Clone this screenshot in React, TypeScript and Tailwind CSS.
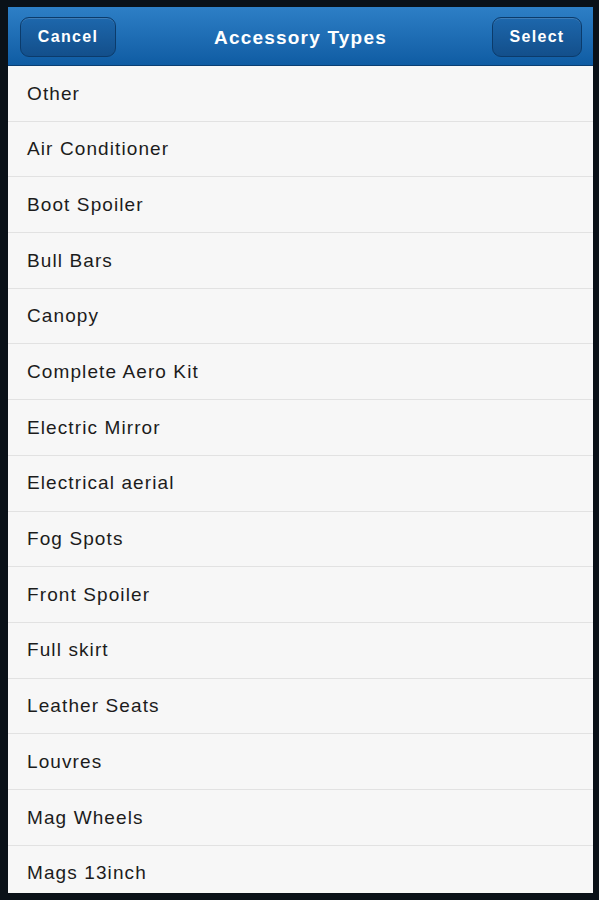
import React from "react";

const items = [
  "Other",
  "Air Conditioner",
  "Boot Spoiler",
  "Bull Bars",
  "Canopy",
  "Complete Aero Kit",
  "Electric Mirror",
  "Electrical aerial",
  "Fog Spots",
  "Front Spoiler",
  "Full skirt",
  "Leather Seats",
  "Louvres",
  "Mag Wheels",
  "Mags 13inch",
];

export default function App() {
  return (
    <div className="w-[599px] h-[900px] bg-[#0a1118] pl-[8px] pr-[6px] pt-[7px] pb-[7px] font-['Liberation_Sans',Arial,sans-serif]">
      <div className="w-full h-full flex flex-col overflow-hidden bg-[#f7f7f7]">
        <div className="h-[59px] shrink-0 flex items-center justify-between pl-[12px] pr-[11px] pt-[2px] bg-gradient-to-b from-[#2d7fc6] to-[#0f5ca3] border-b border-[#0a3f73] relative">
          <button className="h-[40px] w-[96px] rounded-[9px] bg-gradient-to-b from-[#1d67ac] to-[#134f8b] border border-[#0b3b6b] shadow-[inset_0_1px_0_rgba(255,255,255,0.15)] text-white font-bold text-[16px] tracking-[1.3px]">
            Cancel
          </button>
          <div className="absolute left-0 right-0 pt-[2px] text-center text-white font-bold text-[19px] tracking-[1.2px] pointer-events-none">
            Accessory Types
          </div>
          <button className="h-[40px] w-[90px] rounded-[9px] bg-gradient-to-b from-[#1d67ac] to-[#134f8b] border border-[#0b3b6b] shadow-[inset_0_1px_0_rgba(255,255,255,0.15)] text-white font-bold text-[16px] tracking-[1.3px]">
            Select
          </button>
        </div>
        <div className="flex flex-col">
          {items.map((item) => (
            <div
              key={item}
              className="h-[55.7px] shrink-0 flex items-center pl-[19px] pt-[1px] border-b border-[#e2e2e2] text-[#1c1c1c] text-[19px] tracking-[1.1px]"
            >
              {item}
            </div>
          ))}
        </div>
      </div>
    </div>
  );
}
